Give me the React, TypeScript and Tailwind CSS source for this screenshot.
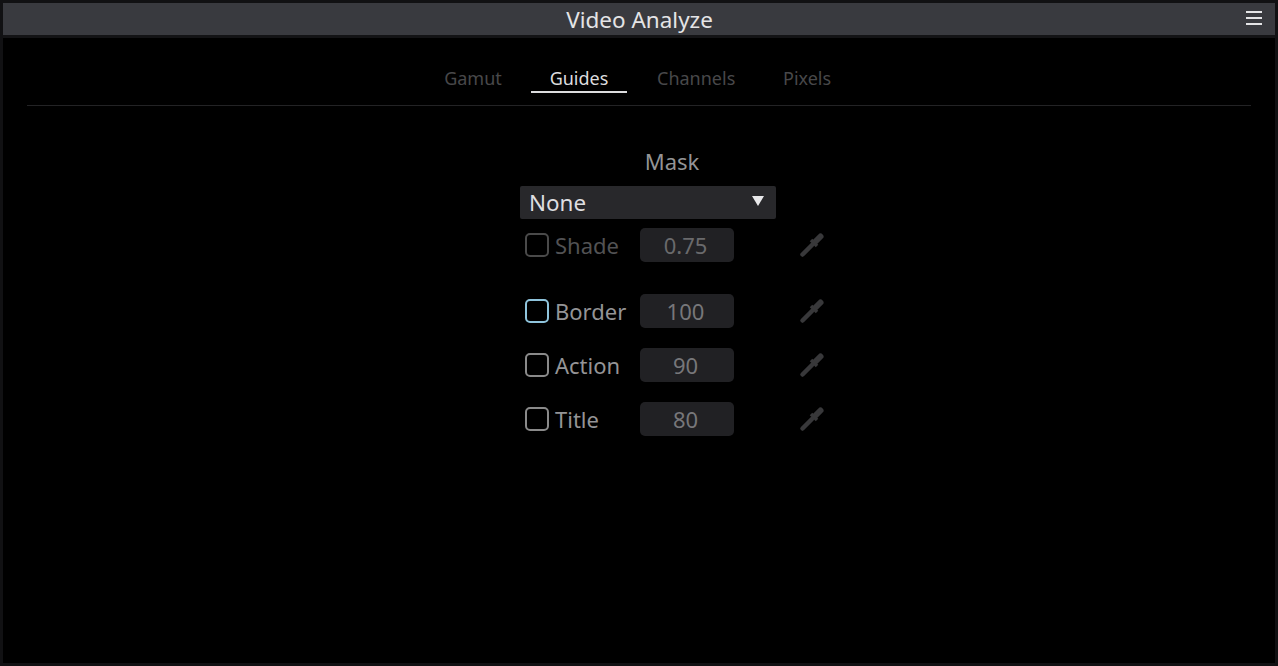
function Eyedropper() {
    return (
        <svg width="26" height="26" viewBox="0 0 26 26" className="block" fill="none" stroke="#38383a" strokeLinecap="round">
            <path d="M3.5 22.5 L13 13" strokeWidth="4.5" />
            <path d="M16 10 L21.5 4.5" strokeWidth="6" />
            <path d="M12 8 L18 14" strokeWidth="3.5" strokeLinecap="butt" />
        </svg>
    );
}

function GuideRow({ label, value, dim, focused, className }: { label: string; value: string; dim?: boolean; focused?: boolean; className?: string }) {
    return (
        <div className={`flex items-center h-[34px] ${className ?? ""}`}>
            <div className="w-[120px] shrink-0 flex items-center">
                <span
                    className={`ml-[5px] w-[24px] h-[24px] rounded-[5px] border-2 ${
                        focused ? "border-[#8fc4dc]" : dim ? "border-[#4a4a4a]" : "border-[#8a8a8a]"
                    }`}
                />
                <span className={`ml-[6px] text-[22px] leading-none ${dim ? "text-[#525254]" : "text-[#949496]"}`}>{label}</span>
            </div>
            <div className={`w-[94px] h-[34px] shrink-0 rounded-[5px] bg-[#212124] flex items-center justify-center pr-[3px] text-[22px] ${dim ? "text-[#6a6a6c]" : "text-[#77777a]"}`}>
                {value}
            </div>
            <div className="ml-[65px] shrink-0">
                <Eyedropper />
            </div>
        </div>
    );
}

export default function App() {
    return (
        <div className="w-[1278px] h-[666px] border-[3px] border-[#111113] bg-black font-['Noto_Sans',sans-serif] overflow-hidden">
            <header className="relative h-[32px] bg-[#393a3f] flex items-center justify-center">
                <span className="pt-[2px] pl-[1px] text-[22.5px] text-[#e4e4e6] leading-none">Video Analyze</span>
                <div className="absolute right-[13px] top-[8px] w-[16px] flex flex-col gap-[4px]">
                    <span className="h-[2px] bg-[#e4e4e6]" />
                    <span className="h-[2px] bg-[#e4e4e6]" />
                    <span className="h-[2px] bg-[#e4e4e6]" />
                </div>
            </header>
            <div className="h-[3px] bg-[#131315]" />

            <nav className="mx-[24px] h-[68px] border-b border-[#232325] flex pl-[417px] pt-[26px] text-[18px] leading-none">
                <span className="w-[58px] text-center pt-[5px] text-[#48484a]">Gamut</span>
                <span className="ml-[29px] h-[29px] w-[96px] text-center pt-[5px] text-[#dcdcde] border-b-2 border-[#dcdcde]">Guides</span>
                <span className="ml-[30px] w-[77px] text-center pt-[5px] text-[#48484a]">Channels</span>
                <span className="ml-[49px] w-[47px] text-center pt-[5px] text-[#48484a]">Pixels</span>
            </nav>

            <section className="ml-[517px] w-[305px] pt-[40px]">
                <div className="w-[304px] text-center text-[22px] leading-[30px] text-[#949496]">Mask</div>
                <div className="mt-[10px] w-[256px] h-[33px] bg-[#28282b] rounded-[2px] flex items-center justify-between pl-[9px] pr-[11px]">
                    <span className="pt-[2px] text-[22.4px] text-[#dedee0] leading-none">None</span>
                    <svg width="14" height="12" viewBox="0 0 14 12" fill="#e8e8ea" className="mb-[4px]">
                        <path d="M1 1 H13 L7 11 Z" />
                    </svg>
                </div>
                <GuideRow label="Shade" value="0.75" dim className="mt-[9px]" />
                <GuideRow label="Border" value="100" focused className="mt-[32px]" />
                <GuideRow label="Action" value="90" className="mt-[20px]" />
                <GuideRow label="Title" value="80" className="mt-[20px]" />
            </section>
        </div>
    );
}
